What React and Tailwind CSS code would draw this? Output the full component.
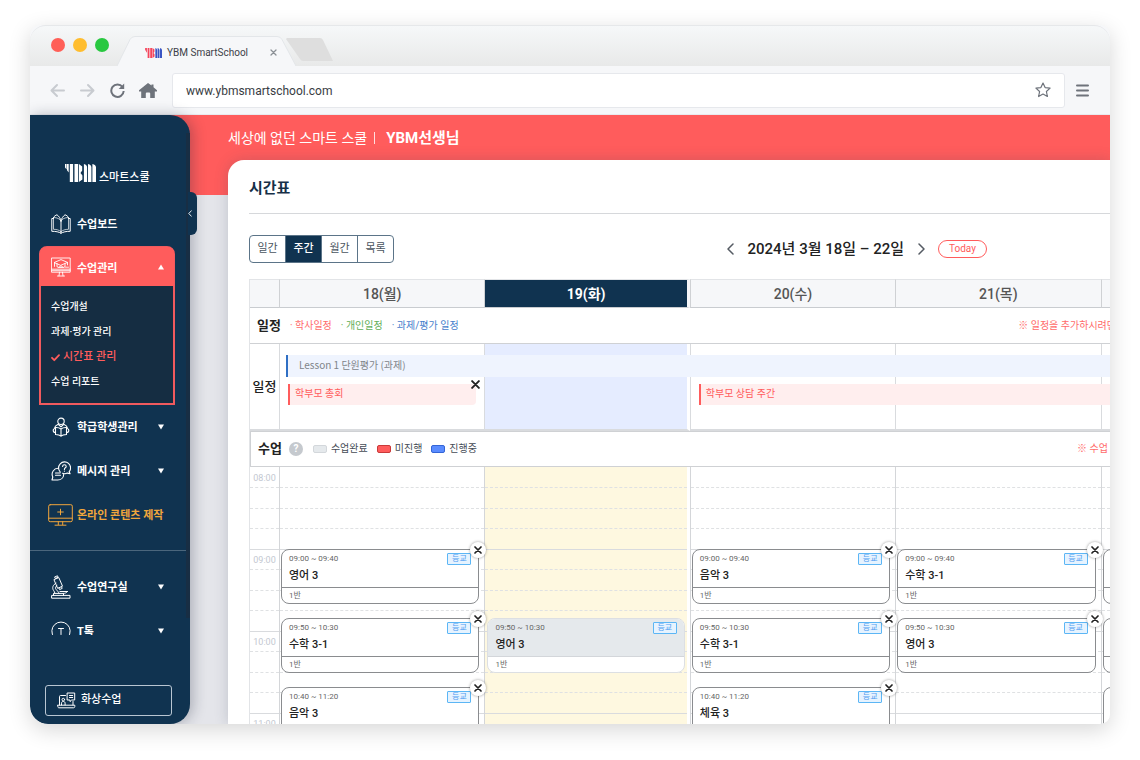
import React from "react";

const WEEK = [
  {
    label: "18(월)",
    cards: [
      { time: "09:00 ~ 09:40", title: "영어 3", group: "1반" },
      { time: "09:50 ~ 10:30", title: "수학 3-1", group: "1반" },
      { time: "10:40 ~ 11:20", title: "음악 3", group: "1반" },
    ],
  },
  {
    label: "19(화)",
    today: true,
    cards: [null, { time: "09:50 ~ 10:30", title: "영어 3", group: "1반", done: true }],
  },
  {
    label: "20(수)",
    cards: [
      { time: "09:00 ~ 09:40", title: "음악 3", group: "1반" },
      { time: "09:50 ~ 10:30", title: "수학 3-1", group: "1반" },
      { time: "10:40 ~ 11:20", title: "체육 3", group: "1반" },
    ],
  },
  {
    label: "21(목)",
    cards: [
      { time: "09:00 ~ 09:40", title: "수학 3-1", group: "1반" },
      { time: "09:50 ~ 10:30", title: "영어 3", group: "1반" },
    ],
  },
  {
    label: "22(금)",
    cards: [
      { time: "09:00 ~ 09:40", title: "국어 3", group: "1반" },
      { time: "09:50 ~ 10:30", title: "수학 3-1", group: "1반" },
      { time: "10:40 ~ 11:20", title: "음악 3", group: "1반" },
    ],
  },
];

const HOURS = ["08:00", "09:00", "10:00", "11:00"];

function Svg({ size = "size-5", box = "0 0 20 20", width = 1, children }) {
  return (
    <svg className={`${size} shrink-0`} viewBox={box} fill="none" stroke="currentColor" strokeWidth={width} strokeLinecap="round" strokeLinejoin="round" aria-hidden="true">
      {children}
    </svg>
  );
}

const BookIcon = () => (
  <Svg>
    <path d="M10 7v12.300C8 17.900 4.800 17.300.8 17.300V4.500H2.500M10 19.300c2-1.400 5.200-2 9.200-2V4.500h-1.700" />
    <path d="M10 7C8.800 4.800 6.300 3.600 2.500 3.500v11.800c3.300 0 5.800.8 7.500 2.400M10 7c1.200-2.200 3.700-3.400 7.500-3.500v11.800c-3.300 0-5.800.8-7.500 2.400" strokeWidth=".7" />
    <path d="M2.500 3.500c.8-1.500 2-2.200 3.500-2.700C8 2.300 9.600 4.500 10 7M17.500 3.500c-.8-1.500-2-2.200-3.500-2.700C12 2.300 10.400 4.500 10 7" />
  </Svg>
);

const ClassIcon = () => (
  <Svg width={0.9}>
    <path d="M.8 1h18.400v14.200H.8zM.8 12.200h18.400M.8 13.700h18.400M8.500 15.200 8 18.800M11.500 15.200l.5 3.600M6.500 19h7" />
    <path d="m3.500 5.400 6.500-2.800 6.500 2.800L10 8.200zM6 6.600v3.200c1.200 1 6.800 1 8 0V6.600M3.500 5.400v4M16.500 5.400v2.500M7.500 10.500 10 8.800l2.500 1.700M14.500 10.200h3" />
  </Svg>
);

const StudentIcon = () => (
  <Svg width={1.1}>
    <circle cx="10" cy="4.300" r="3.200" />
    <path d="M6.800 7.500C5 8.300 3.800 9.600 3.600 11M13.200 7.500c1.800.8 3 2.100 3.200 3.500M10 12c-1.300-1.100-3.300-1.600-5.500-1.500v7c2.200 0 4.200.4 5.500 1.700 1.300-1.300 3.300-1.700 5.500-1.700v-7C13.300 10.400 11.300 10.900 10 12zv7.200" />
    <path d="M4.500 11.500c-1.600 0-2.300.8-2.300 2s.8 2 2.300 2M15.500 11.500c1.600 0 2.300.8 2.300 2s-.8 2-2.300 2M7.500 7.500 10 9.800l2.500-2.300" />
  </Svg>
);

const MessageIcon = () => (
  <Svg width={1.100}>
    <path d="M18.200 10.700A6 6 0 1 0 9.300 11.100M18.200 10.700l.9 2-2.800-.6c-1.500.8-3.200.8-4.800.2" />
    <path d="M11.600 5.500c0-1.200.8-1.800 1.800-1.800s1.800.7 1.800 1.700c0 1.500-1.800 1.300-1.800 3M13.400 10.100v.2" />
    <path d="M7.500 7.300A6 6 0 0 0 1.800 16L1 19h5.700c3.300 0 5.900-2.300 6-5.600M4.500 12h4.500M4.500 14.200h5" />
  </Svg>
);

const ContentIcon = () => (
  <Svg size="w-[25px] h-[22px]" box="0 0 25 22">
    <rect x=".7" y=".7" width="23.600" height="17" rx="1.500" />
    <path d="M.7 14.200h23.600M10.300 17.700v3M14.700 17.700v3M7 21.200h11M9.700 8h5.600M12.500 5.200v5.600" />
  </Svg>
);

const MicroscopeIcon = () => (
  <Svg size="w-5 h-6" box="0 0 20 24">
    <path d="M1 20.400h18v2.800H1zM2.500 20.400v-2h10v2M4 1.800l2.500-1 .6 1.500-2.500 1zM3.300 4.500l4.500-1.900 3.700 8.600-4.500 2zM8 13l.6 1.600 2.600-1.200-.6-1.500" />
    <path d="M5 8.200C1.800 9.800.8 13 2.600 15.500c.6 1 1.300 1.800 1.300 2.900M6 10.500c-1.500 1-2 2.500-1 3.800 1 1.400 2.500 2.200 3 4.100M9 16.500h7.500M12.500 18.400c1.500 0 3-.5 4-1.900" />
  </Svg>
);

const TalkIcon = () => (
  <Svg>
    <path d="M2.800 16A9.200 9.200 0 1 1 17.200 16M7.500 7.500h5M10 7.500v6" />
  </Svg>
);

const VideoIcon = () => (
  <Svg size="w-[19px] h-[17px]" box="0 0 19 17">
    <path d="M2.500 13V4.500c0-.6.400-1 1-1h5M16 9.500V13M.8 13.200h17v1.300c0 .8-.5 1.300-1.300 1.300H2c-.7 0-1.200-.5-1.200-1.300zM10.500 1h7.200v7h-3l-1.700 1.600V8h-2.500zM12.500 3.500h3.200M12.500 5.500h3.200M4.500 13v-1.800c0-1 .6-1.700 1.500-1.700h.6c.9 0 1.500.7 1.500 1.700V13" />
    <circle cx="6.300" cy="7.600" r="1.300" />
  </Svg>
);

const UpArrow = () => (
  <svg className="h-[6px] w-[6px]" viewBox="0 0 6 6" fill="currentColor" aria-hidden="true">
    <path d="M3 .5 6 5.500H0z" />
  </svg>
);

const DownArrow = () => (
  <svg className="h-[6px] w-[6px]" viewBox="0 0 6 6" fill="currentColor" aria-hidden="true">
    <path d="M3 5.500 6 .5H0z" />
  </svg>
);

function YbmMark({ className, first = "#fff", second = "#fff" }) {
  return (
    <svg className={className} viewBox="0 0 31 18" aria-hidden="true">
      <g fill={first}>
        <path d="M0 0h1.600v5.500L0 3.500zM2 0h1.700v8.500L2 6.200zM4.800 0h3.300v18H4.800zM9.500 0h3.600v18H9.500zM13.900 0l3.300 2.500v4l-1.700 2.400 1.900 2.500v4.100L13.900 18z" />
      </g>
      <g fill={second}>
        <path d="M18.900 0q3.200.8 3.200 3.500V18h-3.200zM23 0q3.400.8 3.400 3.500V18H23zM27.400 0Q31 .8 31 3.500V18h-3.600z" />
      </g>
    </svg>
  );
}

function TitleBar() {
  return (
    <div className="flex h-[41px] shrink-0 items-end rounded-t-2xl border-t border-[#e6e8ea] bg-linear-to-b from-[#f6f8f9] to-[#e8e9e9]">
      <div className="flex gap-2 self-start pt-3 pl-[21px]">
        <span className="size-[14px] rounded-full bg-[#ff5f57]" />
        <span className="size-[14px] rounded-full bg-[#ffbd2e]" />
        <span className="size-[14px] rounded-full bg-[#28c840]" />
      </div>
      <div className="relative ml-2 flex h-[30px] w-[179px] items-center pl-7">
        <svg className="absolute inset-0 size-full" viewBox="0 0 179 30" preserveAspectRatio="none" aria-hidden="true">
          <path d="M0 30 13 3.500Q14.500.5 18 .5H160Q163.500.5 165 3.500L179 30" fill="#f6f7f9" stroke="#e3e6e9" />
        </svg>
        <div className="relative flex flex-1 items-center pt-[3px]">
          <YbmMark className="h-[10px] w-[17px]" first="#f5455c" second="#3a55c4" />
          <span className="ml-[5px] text-[10px] leading-4 text-[#3c4148]">YBM SmartSchool</span>
          <button type="button" aria-label="탭 닫기" className="mr-[19px] ml-auto text-[#8b9096]">
            <Svg size="size-[7px]" box="0 0 7 7" width={1.300}>
              <path d="m1 1 5 5M6 1 1 6" />
            </Svg>
          </button>
        </div>
      </div>
      <svg className="mt-3 -ml-[10px] h-7 w-[47px] self-start" viewBox="0 0 47 28" aria-hidden="true">
        <path d="M1 0H34q2 0 3 2L47 23H17q-2 0-3-2L0 1z" fill="#dedede" />
      </svg>
    </div>
  );
}

function Toolbar() {
  return (
    <div className="flex h-[49px] shrink-0 items-center border-b border-[#e8eaee] bg-[#f6f7f9] pr-[21px] pl-5 text-[#6e737b]">
      <button type="button" aria-label="뒤로" className="text-[#c8cbd0]">
        <Svg size="size-[15px]" box="0 0 15 15" width={2}>
          <path d="M14 7.500H2M7 2 1.500 7.500 7 13" />
        </Svg>
      </button>
      <button type="button" aria-label="앞으로" className="ml-[15px] text-[#c8cbd0]">
        <Svg size="size-[15px]" box="0 0 15 15" width={2}>
          <path d="M1 7.500h12M8 2l5.500 5.500L8 13" />
        </Svg>
      </button>
      <button type="button" aria-label="새로고침" className="ml-[15px]">
        <Svg size="size-[15px]" box="0 0 15 15" width={2}>
          <path d="M12.500 4A6.200 6.200 0 1 0 13.700 8" strokeLinecap="butt" />
          <path d="M14.200.5v5.500H8.700z" fill="currentColor" stroke="none" />
        </Svg>
      </button>
      <button type="button" aria-label="홈" className="ml-[14px]">
        <svg className="h-[15px] w-[18px]" viewBox="0 0 18 15" fill="currentColor" aria-hidden="true">
          <path d="M9 0l3.500 2.600V1.500h2v2.700L18 7.200v1.300H15.800V15h-4.600v-4.500q0-1-1-1H7.800q-1 0-1 1V15H2.200V8.500H0V7.200z" />
        </svg>
      </button>
      <label className="ml-[15px] flex h-[35px] flex-1 items-center rounded-[3px] border border-[#e6e8ec] bg-white px-[13px]">
        <input aria-label="주소" defaultValue="www.ybmsmartschool.com" className="min-w-0 flex-1 bg-transparent pt-px text-[12px] leading-4 text-[#383c43] outline-none" />
        <Svg size="size-4" box="0 0 16 16" width={1.200}>
          <path d="m8 1 2.100 4.600 5 .5-3.700 3.400 1 5L8 12l-4.400 2.500 1-5L.9 6.100l5-.5z" />
        </Svg>
      </label>
      <button type="button" aria-label="메뉴" className="ml-[11px]">
        <Svg size="size-[13px]" box="0 0 13 13" width={2}>
          <path d="M1 1.500h11M1 6.500h11M1 11.500h11" />
        </Svg>
      </button>
    </div>
  );
}

function MenuItem({ icon, label, arrow, className = "text-white" }) {
  return (
    <li>
      <button type="button" className={`flex h-[44px] w-full items-center text-left ${className}`}>
        <span className="flex w-[47px] justify-center pl-[14px]">{icon}</span>
        <span className="pt-[2px] text-[11px] leading-4 font-bold">{label}</span>
        {arrow && <span className="mr-[26px] ml-auto"><DownArrow /></span>}
      </button>
    </li>
  );
}

function Sidebar() {
  return (
    <aside className="relative z-20 flex w-[160px] shrink-0 flex-col rounded-r-[20px] rounded-bl-[18px] bg-[#103350] text-white shadow-[3px_0_14px_rgba(20,30,50,0.28)]">
      <div className="flex h-[87px] shrink-0 items-end gap-[3px] pb-5 pl-[35px]">
        <YbmMark className="h-[18px] w-[31px]" />
        <span className="text-[11px] leading-[9px] font-medium">스마트스쿨</span>
      </div>
      <nav className="min-h-0 flex-1 overflow-hidden">
        <ul>
          <MenuItem icon={<BookIcon />} label="수업보드" />
          <li className="mr-[15px] ml-[9px] rounded-t-lg border-2 border-[#f05a5e] bg-[#152d42]">
            <button type="button" aria-expanded="true" className="-mx-px -mt-px flex h-[39px] w-[calc(100%+2px)] items-center rounded-t-md bg-[#ff5c5c] pt-px text-left">
              <span className="flex w-[37px] justify-center pl-[5px]">
                <ClassIcon />
              </span>
              <span className="pt-[3px] text-[11px] leading-4 font-bold">수업관리</span>
              <span className="mr-[10px] ml-auto"><UpArrow /></span>
            </button>
            <ul className="grid gap-[9px] pt-[13px] pb-[13px] pl-[10px] text-[10px] leading-4 font-medium">
              <li><a href="#open">수업개설</a></li>
              <li><a href="#tasks">과제·평가 관리</a></li>
              <li>
                <a href="#timetable" aria-current="page" className="flex items-center gap-[3px] text-[11px] leading-4 text-[#ff5c5c]">
                  <Svg size="size-[9px]" box="0 0 9 9" width={1.800}>
                    <path d="m1 4.800 2.300 2.400L8 2.200" />
                  </Svg>
                  시간표 관리
                </a>
              </li>
              <li><a href="#report">수업 리포트</a></li>
            </ul>
          </li>
          <MenuItem icon={<StudentIcon />} label="학급학생관리" arrow />
          <MenuItem icon={<MessageIcon />} label="메시지 관리" arrow />
          <MenuItem icon={<ContentIcon />} label="온라인 콘텐츠 제작" className="text-[#f0a63c]" />
          <li className="mr-1 mb-[14px] h-[14px] border-b border-[#4b667c]" />
          <MenuItem icon={<MicroscopeIcon />} label="수업연구실" arrow />
          <MenuItem icon={<TalkIcon />} label="T톡" arrow />
        </ul>
      </nav>
      <div className="h-[89px] shrink-0 pt-[50px] pr-[18px] pl-[15px]">
        <button type="button" className="flex h-[31px] w-full items-center gap-[5px] rounded-[3px] border border-[#b9c6d2] pl-[11px] text-[11px] font-medium">
          <VideoIcon />
          화상수업
        </button>
      </div>
      <span className="absolute top-[18px] right-0 h-[485px] w-1 bg-[#182e44]" />
      <button type="button" aria-label="메뉴 접기" className="absolute top-[77px] -right-[7px] flex h-[43px] w-[9px] items-center rounded-r-md bg-[#103350]">
        <Svg size="h-[7px] w-1" box="0 0 4 7" width={0.9}>
          <path d="M3.300.8.8 3.500l2.500 2.700" />
        </Svg>
      </button>
    </aside>
  );
}

function Cross({ size = "size-2" }) {
  return (
    <Svg size={size} box="0 0 8 8" width={1.700}>
      <path d="m1 1 6 6M7 1 1 7" />
    </Svg>
  );
}

function LessonCard({ time, title, group, done }) {
  return (
    <article className={`relative h-[55px] rounded-lg border bg-white ${done ? "border-[#dcdfe3]" : "border-[#8a8c8f]"}`}>
      <div className={`flex h-[38px] justify-between rounded-t-[7px] border-b px-[7px] ${done ? "border-[#d3d6da] bg-[#e5e9ec]" : "border-[#8a8c8f]"}`}>
        <div>
          <p className="pt-[3px] text-[8px] leading-[11px] text-[#666]">{time}</p>
          <h3 className="mt-1 text-[11px] leading-4 font-medium text-[#222]">{title}</h3>
        </div>
        <span className="mt-[3px] flex h-3 w-6 items-center justify-center rounded-[1px] border border-[#5cb6f5] bg-[#e6f3ff] text-[8px] leading-none text-[#4f9cf0]">등교</span>
      </div>
      <p className="pl-[7px] text-[8px] leading-4 text-[#666]">{group}</p>
      {!done && (
        <button type="button" aria-label={`${title} 삭제`} className="absolute -top-2 -right-2 flex size-4 items-center justify-center rounded-full bg-white text-[#222] shadow-[0_0_3px_rgba(0,0,0,0.4)]">
          <Cross />
        </button>
      )}
    </article>
  );
}

function HourLines({ labels }) {
  return (
    <div className="col-start-1 row-start-1 pt-px">
      {HOURS.map((hour) => (
        <div key={hour} className="grid h-[82px] grid-rows-4 border-b border-[#d9dbde]">
          <div className="border-b border-dashed border-[#dfe1e3] pt-1 text-center text-[9px] leading-3 text-[#c3c8d1]">{labels && hour}</div>
          <div className="border-b border-dashed border-[#dfe1e3]" />
          <div className="border-b border-dashed border-[#dfe1e3]" />
        </div>
      ))}
    </div>
  );
}

function Swatch({ color, children }) {
  return (
    <li className="flex items-center gap-1">
      <span className={`h-2 w-[14px] rounded-[2px] border ${color}`} />
      {children}
    </li>
  );
}

function Timetable() {
  return (
    <table className="w-full min-w-[1057px] table-fixed border-separate border-spacing-0 border-l border-[#e2e4e7]">
      <colgroup>
        <col className="w-[29px]" />
        <col />
        <col />
        <col />
        <col />
        <col />
      </colgroup>
      <thead>
        <tr className="h-[29px] text-[14px] leading-5">
          <td className="border-y border-t-[#e2e4e7] border-b-[#c9ccd0] bg-[#f6f7f9]" />
          {WEEK.map((day) => (
            <th
              key={day.label}
              scope="col"
              className={`border-y border-l border-t-[#e2e4e7] border-b-[#c9ccd0] border-l-[#cfd1d4] p-0 ${day.today ? "border-r-[3px] border-r-[#f6f7f9] bg-[#103350] font-bold text-white" : "bg-[#f6f7f9] font-medium text-[#555]"}`}
            >
              {day.label}
            </th>
          ))}
        </tr>
      </thead>
      <tbody>
        <tr className="h-9">
          <td colSpan={6} className="border-b border-[#cfd1d4] p-0">
            <div className="flex items-center pr-[190px] pl-[7px] text-[10px] leading-4">
              <h2 className="text-[13px] font-bold text-[#222]">일정</h2>
              <ul className="ml-[9px] flex gap-[9px]">
                <li className="text-[#ff6b6b]">· 학사일정</li>
                <li className="text-[#5fae57]">· 개인일정</li>
                <li className="text-[#4680cc]">· 과제/평가 일정</li>
              </ul>
              <p className="ml-auto text-[#ff6b6b]">※ 일정을 추가하시려면</p>
            </div>
          </td>
        </tr>
        <tr className="h-[87px]">
          <th scope="row" className="border-b-2 border-[#d9dbde] p-0 text-[13px] leading-4 font-medium whitespace-nowrap text-[#222]">일정</th>
          {WEEK.map((day, i) => (
            <td key={day.label} className={`relative border-b-2 border-l border-[#d9dbde] p-0 ${day.today ? "border-r-[3px] border-r-white bg-[#e5ecff]" : ""}`}>
              {i === 0 && (
                <>
                  <div className="absolute top-[11px] left-[6px] z-10 h-[22px] w-[500%] border-l-2 border-[#2f6fc4] bg-[#eff4fe] pl-[11px] font-['Noto_Sans_CJK_KR',sans-serif] text-[10px] leading-5 text-[#808489]">Lesson 1 단원평가 (과제)</div>
                  <div className="absolute top-10 right-2 left-2 z-10 h-[21px] rounded-r border-l-2 border-[#ff5c5c] bg-[#ffeeee] pl-[5px] text-[10px] leading-5 text-[#ff5c5c]">
                    학부모 총회
                    <button type="button" aria-label="학부모 총회 삭제" className="absolute -top-1 -right-1 text-[#222]">
                      <Cross size="size-[9px]" />
                    </button>
                  </div>
                </>
              )}
              {i === 2 && (
                <div className="absolute top-10 left-2 z-10 h-[21px] w-[300%] border-l-2 border-[#ff5c5c] bg-[#ffeeee] pl-[5px] text-[10px] leading-5 text-[#ff5c5c]">학부모 상담 주간</div>
              )}
            </td>
          ))}
        </tr>
        <tr className="h-9">
          <td colSpan={6} className="border-t border-b border-l border-[#cfd1d4] p-0">
            <div className="flex items-center pr-[198px] pl-[7px] text-[10px] leading-4">
              <h2 className="text-[13px] font-bold text-[#222]">수업</h2>
              <button type="button" aria-label="도움말" className="ml-[7px] size-[14px] rounded-full bg-[#c5c9ce] text-[10px] leading-[14px] font-bold text-white">?</button>
              <ul className="ml-[10px] flex gap-[9px] text-[#444b55]">
                <Swatch color="border-[#d3d7db] bg-[#e5e9ec]">수업완료</Swatch>
                <Swatch color="border-[#c93a3a] bg-[#ff5c5c]">미진행</Swatch>
                <Swatch color="border-[#3465d6] bg-[#5a8cff]">진행중</Swatch>
              </ul>
              <p className="ml-auto text-[#ff6b6b]">※ 수업</p>
            </div>
          </td>
        </tr>
        <tr className="align-top">
          <td className="p-0">
            <HourLines labels />
          </td>
          {WEEK.map((day) => (
            <td key={day.label} className="border-l border-[#d4d6d9] p-0">
              <div className={`grid ${day.today ? "mr-[3px] bg-[#fef8e0]" : ""}`}>
                <HourLines />
                <div className={`col-start-1 row-start-1 flex flex-col gap-[14px] pt-[82px] ${day.today ? "px-[2px]" : "pr-[5px] pl-px"}`}>
                  {day.cards.map((card, i) => (card ? <LessonCard key={i} {...card} /> : <div key={i} className="h-[55px]" />))}
                </div>
              </div>
            </td>
          ))}
        </tr>
      </tbody>
    </table>
  );
}

function Tabs() {
  return (
    <div className="flex h-7 w-[145px] overflow-hidden rounded border border-[#5b7488] text-[11px] leading-4 text-[#4a5560]">
      {["일간", "주간", "월간", "목록"].map((name, i) => (
        <button
          key={name}
          type="button"
          aria-pressed={i === 1}
          className={`flex-1 ${i > 0 ? "border-l border-[#5b7488]" : ""} ${i === 1 ? "bg-[#103350] font-medium text-white" : ""}`}
        >
          {name}
        </button>
      ))}
    </div>
  );
}

function Main() {
  return (
    <main className="-ml-5 flex min-w-0 flex-1 flex-col bg-[linear-gradient(#ff5c5c_0_80px,#e4e5ea_80px)] pl-5">
      <header className="flex h-[45px] shrink-0 items-center pl-[38px] text-[14px] leading-5 text-white">
        <span>세상에 없던 스마트 스쿨</span>
        <span className="mx-[7px] h-3 w-px bg-white/80" />
        <strong className="pl-1 text-[15px] font-bold">YBM선생님</strong>
      </header>
      <section className="ml-[38px] min-h-0 flex-1 overflow-hidden rounded-tl-2xl bg-white pl-[21px] shadow-[0_0_14px_rgba(60,70,90,0.22)]">
        <h1 className="flex h-[54px] items-center border-b border-[#d6d8db] pt-[2px] text-[15px] leading-5 font-bold text-[#163048]">시간표</h1>
        <div className="flex h-[65px] items-center justify-between pt-1 pr-[123px]">
          <Tabs />
          <div className="flex items-center">
            <button type="button" aria-label="이전 주" className="text-[#555b63]">
              <Svg size="h-3 w-[7px]" box="0 0 7 12" width={1.500}>
                <path d="M6 1 1 6l5 5" />
              </Svg>
            </button>
            <h2 className="mx-[14px] text-[15px] leading-5 font-medium text-[#222]">2024년 3월 18일 – 22일</h2>
            <button type="button" aria-label="다음 주" className="text-[#555b63]">
              <Svg size="h-3 w-[7px]" box="0 0 7 12" width={1.500}>
                <path d="m1 1 5 5-5 5" />
              </Svg>
            </button>
            <button type="button" className="ml-[13px] h-[18px] w-[49px] rounded-full border border-[#ff5c5c] text-[10px] leading-4 text-[#ff5c5c]">Today</button>
          </div>
        </div>
        <Timetable />
      </section>
    </main>
  );
}

export default function App() {
  return (
    <div className="flex h-screen bg-white px-[30px] pt-[25px] pb-9 font-['Roboto','Noto_Sans_CJK_KR',sans-serif]">
      <div className="flex min-w-0 flex-1 flex-col overflow-hidden rounded-[10px] rounded-bl-[18px] bg-[#f6f7f9] shadow-[0_6px_22px_rgba(0,0,0,0.16)]">
        <TitleBar />
        <Toolbar />
        <div className="flex min-h-0 flex-1 bg-white">
          <Sidebar />
          <Main />
        </div>
      </div>
    </div>
  );
}
